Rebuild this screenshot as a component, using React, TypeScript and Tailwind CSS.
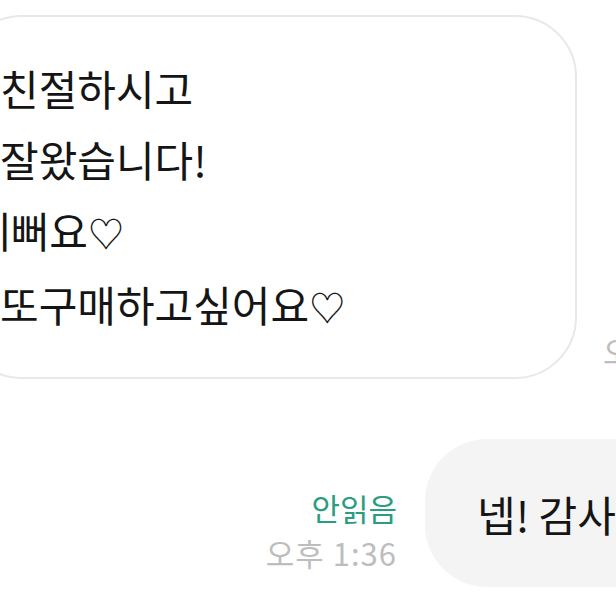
export default function App() {
  return (
    <div className="relative h-[616px] w-[616px] overflow-hidden bg-white font-['Noto_Sans_CJK_KR','Noto_Sans',sans-serif]">
      {/* 받은 메시지 */}
      <div className="mt-[15px] -ml-[40px] flex items-end">
        <div className="w-[617px] shrink-0 rounded-[62px] border-2 border-[#e8e8e8] bg-white pt-[35px] pb-[35px] pl-[38px] text-[42px] leading-[71px] text-[#151515]">
          <div className="whitespace-nowrap">친절하시고</div>
          <div className="whitespace-nowrap">잘왔습니다!</div>
          <div className="-ml-[28px] whitespace-nowrap">
            예뻐요<span className="text-[36px]">♡</span>
          </div>
          <div className="whitespace-nowrap">
            또구매하고싶어요<span className="text-[36px]">♡</span>
          </div>
        </div>
        <div className="mb-[10px] ml-[26px] shrink-0 whitespace-nowrap text-[31px] leading-[36px] text-[#bdbdbd]">
          오후 1:36
        </div>
      </div>

      {/* 보낸 메시지 */}
      <div className="mt-[60px] flex items-end">
        <div className="mb-[12px] ml-[266px] flex w-[159px] shrink-0 flex-col items-end pr-[28px]">
          <span className="whitespace-nowrap text-[31px] leading-[46px] text-[#2a9d80]">안읽음</span>
          <span className="whitespace-nowrap text-[31px] leading-[44px] tracking-[1px] text-[#bdbdbd]">오후 1:36</span>
        </div>
        <div className="flex h-[148px] w-[420px] shrink-0 items-center rounded-[62px] bg-[#f4f4f4] pl-[52px] text-[42px] text-[#151515]">
          <span className="whitespace-nowrap">넵! 감사합니다</span>
        </div>
      </div>
    </div>
  )
}
